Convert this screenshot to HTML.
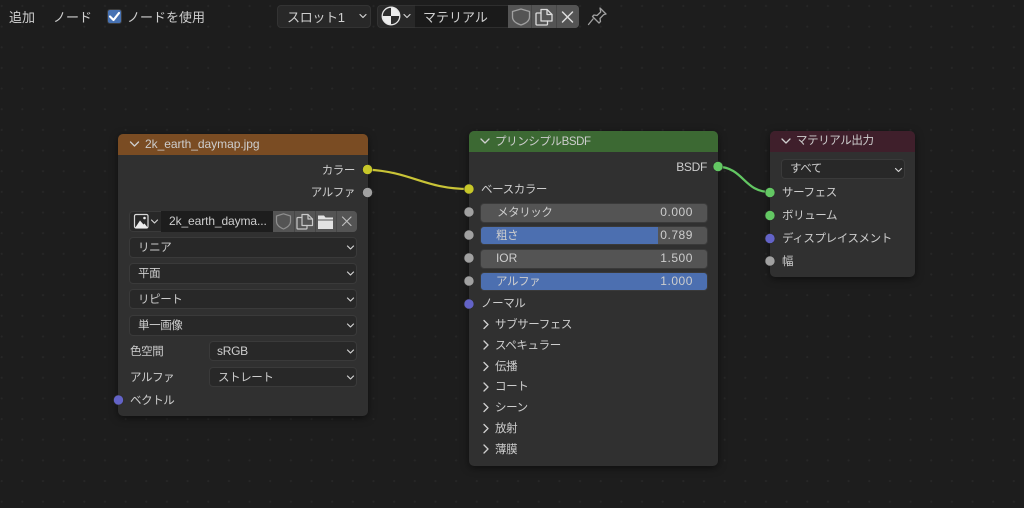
<!DOCTYPE html>
<html lang="ja"><head><meta charset="utf-8"><title>Shader Editor</title>
<style>
html,body{margin:0;padding:0;width:1024px;height:508px;overflow:hidden;background:#1d1d1d}
body{position:relative;font-family:"Liberation Sans","Noto Sans CJK JP",sans-serif;color:#cfcfcf}
.grid{position:absolute;left:0;top:0;width:1024px;height:508px;background-image:radial-gradient(circle at 1.7px 6px,#272727 0,#272727 .9px,transparent 1.2px);background-size:20.67px 20.67px}
.b{position:absolute;box-sizing:border-box}
.n{border-radius:5px;background:#303030;box-shadow:0 2px 8px rgba(0,0,0,.5)}
.h{position:absolute;left:0;top:0;right:0;border-radius:5px 5px 0 0}
.t{position:absolute;white-space:nowrap;font-size:11.5px;letter-spacing:-.4px;line-height:16px;transform:translateY(calc(-50% + 1px));color:#cdcdcd}
.l{font-size:12px;letter-spacing:-.05px;transform:translateY(-50%)}
.v{font-size:12px;letter-spacing:.55px;transform:translateY(-50%)}
.top{font-size:13px;letter-spacing:0;color:#cfcfcf}
.d{background:#282828;border:1px solid #3a3a3a;border-radius:4px}
.f{background:#545454;border:1px solid #3a3a3a;border-radius:4px;overflow:hidden}
svg{position:absolute;left:0;top:0}
</style></head><body>
<div class="grid"></div>

<!-- top bar widgets -->
<div class="b" style="left:107px;top:9px;width:15px;height:15px;background:#4772b3;border-radius:3px;border:1px solid #3c3c3c"></div>
<div class="b d" style="left:277px;top:5px;width:94px;height:23px;background:#282828;border-color:#333"></div>
<div class="b d" style="left:377px;top:5px;width:38px;height:23px;background:#282828;border-color:#333;border-radius:4px 0 0 4px;border-right:0"></div>
<div class="b" style="left:415px;top:5px;width:93px;height:23px;background:#1a1a1a;border:1px solid #2e2e2e;border-width:1px 0"></div>
<div class="b" style="left:508px;top:5px;width:71px;height:23px;background:#464646;border-radius:0 4px 4px 0"></div>
<div class="b" style="left:508px;top:5px;width:23px;height:23px;background:#545454"></div>
<div class="b" style="left:532px;top:5px;width:24px;height:23px;background:#545454"></div>
<div class="b" style="left:557px;top:5px;width:22px;height:23px;background:#545454;border-radius:0 4px 4px 0"></div>

<div class="t top" style="left:9px;top:17px">追加</div>
<div class="t top" style="left:53px;top:17px">ノード</div>
<div class="t top" style="left:127px;top:17px">ノードを使用</div>
<div class="t top" style="left:287px;top:17px;letter-spacing:-.3px">スロット1</div>
<div class="t top" style="left:423px;top:17px">マテリアル</div>

<!-- image texture node -->
<div class="b n" style="left:118px;top:134px;width:250px;height:282px">
  <div class="h" style="height:21px;background:#7a4c23"></div>
</div>
<div class="t l" style="left:145px;top:143.500px">2k_earth_daymap.jpg</div>
<div class="t" style="right:669px;top:170px">カラー</div>
<div class="t" style="right:669px;top:192px">アルファ</div>
<div class="b d" style="left:129px;top:211px;width:32px;height:21px;border-radius:4px 0 0 4px;border-right:0"></div>
<div class="b" style="left:161px;top:211px;width:112px;height:21px;background:#1d1d1d"></div>
<div class="b" style="left:273px;top:211px;width:84px;height:21px;background:#464646;border-radius:0 4px 4px 0"></div>
<div class="b" style="left:273px;top:211px;width:21px;height:21px;background:#545454"></div>
<div class="b" style="left:295px;top:211px;width:20px;height:21px;background:#545454"></div>
<div class="b" style="left:316px;top:211px;width:20px;height:21px;background:#545454"></div>
<div class="b" style="left:337px;top:211px;width:20px;height:21px;background:#545454;border-radius:0 4px 4px 0"></div>
<div class="t l" style="left:169px;top:221px;letter-spacing:-.1px">2k_earth_dayma...</div>
<div class="b d" style="left:129px;top:237px;width:228px;height:21px"></div>
<div class="t" style="left:138px;top:247px">リニア</div>
<div class="b d" style="left:129px;top:263px;width:228px;height:21px"></div>
<div class="t" style="left:138px;top:273px">平面</div>
<div class="b d" style="left:129px;top:289px;width:228px;height:20px"></div>
<div class="t" style="left:138px;top:299px">リピート</div>
<div class="b d" style="left:129px;top:315px;width:228px;height:21px"></div>
<div class="t" style="left:138px;top:325px">単一画像</div>
<div class="t" style="left:130px;top:351px">色空間</div>
<div class="b d" style="left:209px;top:341px;width:148px;height:20px"></div>
<div class="t l" style="left:217px;top:351px;letter-spacing:-.3px">sRGB</div>
<div class="t" style="left:130px;top:377px">アルファ</div>
<div class="b d" style="left:209px;top:367px;width:148px;height:20px"></div>
<div class="t" style="left:218px;top:377px">ストレート</div>
<div class="t" style="left:130px;top:400px">ベクトル</div>

<!-- principled node -->
<div class="b n" style="left:469px;top:131px;width:249px;height:335px">
  <div class="h" style="height:21px;background:#3c6933"></div>
</div>
<div class="t" style="left:495px;top:141px">プリンシプルBSDF</div>
<div class="t l" style="right:317px;top:166.500px;letter-spacing:-.3px">BSDF</div>
<div class="t" style="left:481px;top:189px">ベースカラー</div>
<div class="b f" style="left:480px;top:203px;width:228px;height:20px"></div>
<div class="b f" style="left:480px;top:226px;width:228px;height:19px"><div style="width:177px;height:100%;background:#4c6fb0"></div></div>
<div class="b f" style="left:480px;top:249px;width:228px;height:20px"></div>
<div class="b f" style="left:480px;top:272px;width:228px;height:19px;background:#4c6fb0"></div>
<div class="t" style="left:497px;top:212px">メタリック</div>
<div class="t v" style="right:331px;top:212px">0.000</div>
<div class="t" style="left:496px;top:235px">粗さ</div>
<div class="t v" style="right:331px;top:235px">0.789</div>
<div class="t l" style="left:496px;top:258px">IOR</div>
<div class="t v" style="right:331px;top:258px">1.500</div>
<div class="t" style="left:496px;top:281px">アルファ</div>
<div class="t v" style="right:331px;top:281px">1.000</div>
<div class="t" style="left:481px;top:303px">ノーマル</div>
<div class="t" style="left:495px;top:324px">サブサーフェス</div>
<div class="t" style="left:495px;top:345px">スペキュラー</div>
<div class="t" style="left:495px;top:366px">伝播</div>
<div class="t" style="left:495px;top:386px">コート</div>
<div class="t" style="left:495px;top:407px">シーン</div>
<div class="t" style="left:495px;top:428px">放射</div>
<div class="t" style="left:495px;top:449px">薄膜</div>

<!-- output node -->
<div class="b n" style="left:770px;top:131px;width:145px;height:146px">
  <div class="h" style="height:21px;background:#3f1f2b"></div>
</div>
<div class="t" style="left:796px;top:140px">マテリアル出力</div>
<div class="b d" style="left:781px;top:159px;width:124px;height:20px"></div>
<div class="t" style="left:790px;top:168px">すべて</div>
<div class="t" style="left:782px;top:192px">サーフェス</div>
<div class="t" style="left:782px;top:215px">ボリューム</div>
<div class="t" style="left:782px;top:238px">ディスプレイスメント</div>
<div class="t" style="left:782px;top:261px">幅</div>

<svg width="1024" height="508" viewBox="0 0 1024 508" fill="none">
  <!-- wires -->
  <path d="M367.500 169.500C412 172 425 189 469 189" stroke="#c9c437" stroke-width="2.200"/>
  <path d="M718 166.500C744 168 744 192 770 192" stroke="#63c763" stroke-width="2.200"/>
  <!-- sockets -->
  <g stroke="#2a2a2a" stroke-width=".6">
    <circle cx="367.500" cy="169.500" r="5" fill="#c7c729"/>
    <circle cx="367.500" cy="192.500" r="5" fill="#a1a1a1"/>
    <circle cx="118.500" cy="400" r="5" fill="#6363c7"/>
    <circle cx="469" cy="189" r="5" fill="#c7c729"/>
    <circle cx="469" cy="212" r="5" fill="#a1a1a1"/>
    <circle cx="469" cy="235" r="5" fill="#a1a1a1"/>
    <circle cx="469" cy="258" r="5" fill="#a1a1a1"/>
    <circle cx="469" cy="281" r="5" fill="#a1a1a1"/>
    <circle cx="469" cy="304" r="5" fill="#6363c7"/>
    <circle cx="718" cy="166.500" r="5" fill="#63c763"/>
    <circle cx="770" cy="192.500" r="5" fill="#63c763"/>
    <circle cx="770" cy="215.500" r="5" fill="#63c763"/>
    <circle cx="770" cy="238.500" r="5" fill="#6363c7"/>
    <circle cx="770" cy="261" r="5" fill="#a1a1a1"/>
  </g>
  <!-- checkbox tick -->
  <path d="M110 16.500l3.500 3.500 5.500-7" stroke="#fff" stroke-width="2.200" stroke-linecap="round" stroke-linejoin="round"/>
  <!-- chevrons -->
  <g stroke="#cfcfcf" stroke-width="1.300" stroke-linecap="round" stroke-linejoin="round">
    <path d="M130.500 142l4 4 4-4"/>
    <path d="M481 139l4 4 4-4"/>
    <path d="M782 139l4 4 4-4"/>
    <path d="M484 320.500l4 4-4 4M484 341l4 4-4 4M484 362.500l4 4-4 4M484 383l4 4-4 4M484 403.500l4 4-4 4M484 424.500l4 4-4 4M484 445l4 4-4 4"/>
  </g>
  <g stroke="#d2d2d2" stroke-width="1.200" stroke-linecap="round" stroke-linejoin="round">
    <path d="M360 14.500l3 3 3-3"/>
    <path d="M404 14.500l3 3 3-3"/>
    <path d="M151.500 220l3 3 3-3"/>
    <path d="M347.500 246l3 3 3-3M347.500 272l3 3 3-3M347.500 298l3 3 3-3M347.500 324l3 3 3-3M347.500 350l3 3 3-3M347.500 376l3 3 3-3"/>
    <path d="M895.500 168.500l3 3 3-3"/>
  </g>
  <!-- material preview -->
  <circle cx="391" cy="16" r="8.500" fill="#ececec"/>
  <path d="M391 16V7.500A8.500 8.500 0 0 0 382.500 16ZM391 16H399.500A8.500 8.500 0 0 1 391 24.500Z" fill="#2c2c2c"/>
  <circle cx="391" cy="16" r="8.800" stroke="#e4e4e4" stroke-width="1.300"/>
  <!-- top shield / copy / x / pin -->
  <path d="M512.500 11.500L521 9l8.500 2.500v5.500c0 4-4 6.500-8.500 8-4.500-1.500-8.500-4-8.500-8z" stroke="#a0a0a0" stroke-width="1.300" stroke-linejoin="round"/>
  <g stroke="#dcdcdc" stroke-width="1.300" stroke-linejoin="round" stroke-linecap="round">
    <path d="M541 13h-4a1 1 0 0 0-1 1V24a1 1 0 0 0 1 1h9.500a1 1 0 0 0 1-1v-3"/>
    <path d="M541 9.500h6l5 5V21H541z"/>
    <path d="M547 9.500v5h5"/>
    <path d="M562.500 12l10 10M572.500 12l-10 10" stroke-width="1.500"/>
  </g>
  <g stroke="#a0a0a0" stroke-width="1.300" stroke-linejoin="round" stroke-linecap="round">
    <path d="M600 8l6 6-2.500.8-3.500 3.700.5 3-1.500 1.500-6.500-6.500 1.500-1.500 3 .5 3.700-3.500z"/>
    <path d="M593 19l-4.500 5.500"/>
  </g>
  <!-- image icon -->
  <rect x="134.500" y="214.500" width="13.500" height="13.500" rx="1.500" stroke="#d8d8d8" stroke-width="1.200"/>
  <path d="M135 228l5-7.500 3.500 4 1-1L148 228z" fill="#ececec"/>
  <circle cx="144.500" cy="218" r="1.300" fill="#ececec"/>
  <!-- image buttons -->
  <path d="M276.500 216l7-2.200 7 2.200v5.500c0 3.800-3.500 6-7 7.500-3.500-1.500-7-3.700-7-7.500z" stroke="#8f8f8f" stroke-width="1.200" stroke-linejoin="round"/>
  <g stroke="#c8c8c8" stroke-width="1.200" stroke-linejoin="round" stroke-linecap="round">
    <path d="M302 217.500h-4a1 1 0 0 0-1 1V228a1 1 0 0 0 1 1h8a1 1 0 0 0 1-1v-2.500"/>
    <path d="M302 214.500h6l4.500 4.500v6.500H302z"/>
    <path d="M308 214.500v4.500h4.500"/>
    <path d="M342.500 217l8.500 8.500M351 217l-8.500 8.500" stroke="#bdbdbd"/>
  </g>
  <path d="M318 215.500h6l1.500 2H333v2h-15z" fill="#e2e2e2"/>
  <rect x="318" y="220.500" width="15" height="8.500" fill="#e2e2e2"/>
</svg>
</body></html>
